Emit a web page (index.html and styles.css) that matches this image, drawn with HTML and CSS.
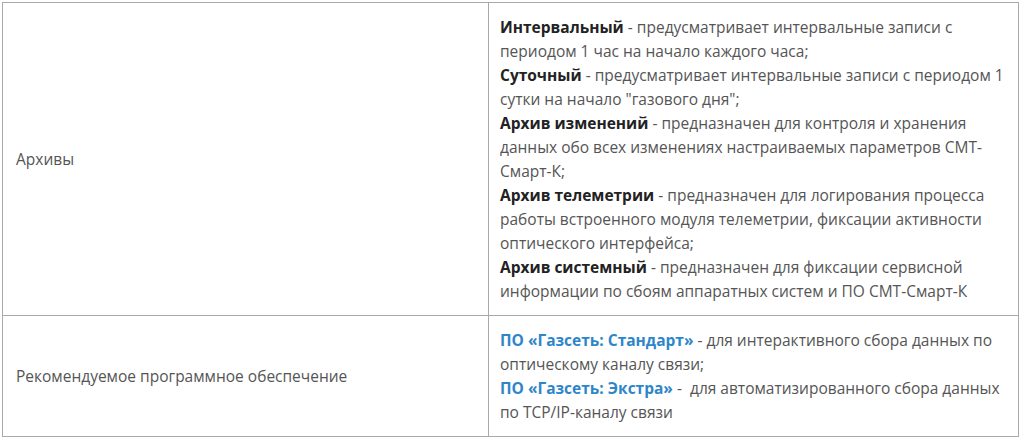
FILE: index.html
```html
<!DOCTYPE html>
<html lang="ru">
<head>
<meta charset="utf-8">
<link rel="stylesheet" href="styles.css">
</head>
<body>
<div class="wrap">
<table class="spec">
<tbody>
<tr>
<td class="name">Архивы</td>
<td class="value"><b>Интервальный</b> - предусматривает интервальные записи с периодом 1 час на начало каждого часа;<br><b>Суточный</b> - предусматривает интервальные записи с периодом 1 сутки на начало "газового дня";<br><b>Архив изменений</b> - предназначен для контроля и хранения данных обо всех изменениях настраиваемых параметров СМТ-Смарт-К;<br><b>Архив телеметрии</b> - предназначен для логирования процесса работы встроенного модуля телеметрии, фиксации активности оптического интерфейса;<br><b>Архив системный</b> - предназначен для фиксации сервисной информации по сбоям аппаратных систем и ПО СМТ-Смарт-К</td>
</tr>
<tr>
<td class="name">Рекомендуемое программное обеспечение</td>
<td class="value"><a class="link" href="#">ПО «Газсеть: Стандарт»</a> - для интерактивного сбора данных по оптическому каналу связи;<br><a class="link" href="#">ПО «Газсеть: Экстра»</a> -&nbsp; для автоматизированного сбора данных по TCP/IP-каналу связи</td>
</tr>
</tbody>
</table>
</div>
</body>
</html>
```
FILE: styles.css
```css
html, body {
  margin: 0;
  padding: 0;
  background: #fff;
}
.wrap {
  padding: 2px 4px 0 2px;
}
.spec {
  width: 1017px;
  border-collapse: collapse;
  font-family: "Open Sans", "Noto Sans", sans-serif;
  font-size: 15.5px;
  line-height: 24px;
  color: #555;
}
.spec td {
  border: 1px solid #a9a9a9;
  vertical-align: middle;
}
.name {
  width: 460px;
  padding: 12px 12px 12px 13px;
}
.value {
  padding: 12px 12px 12px 11px;
}
.value b {
  color: #222;
  font-weight: 700;
}
.link {
  color: #2e86c9;
  font-weight: 700;
  text-decoration: none;
}
```
